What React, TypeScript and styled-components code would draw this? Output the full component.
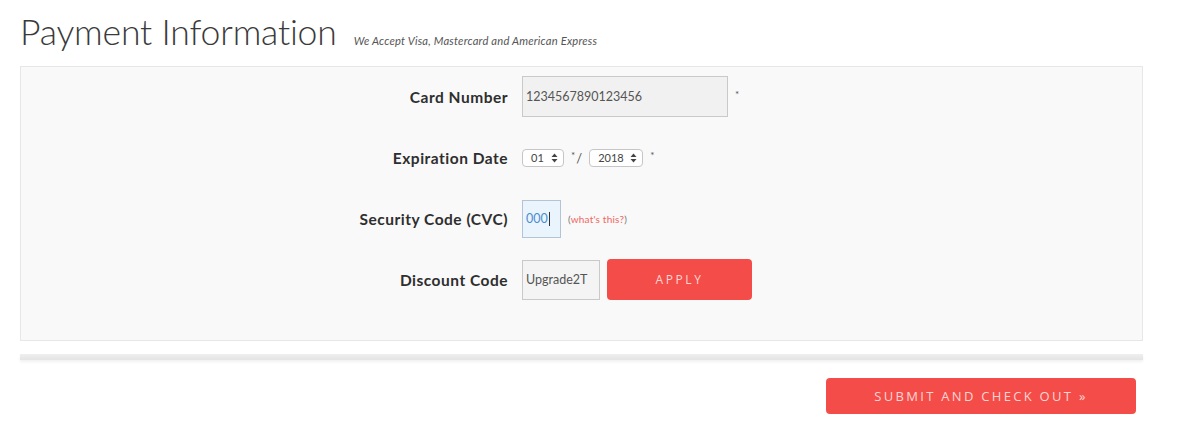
import * as React from "react";
import styled, { createGlobalStyle } from "styled-components";

const GlobalStyle = createGlobalStyle`
  body {
    margin: 0;
    background: #fff;
    font-family: Lato, "Open Sans", sans-serif;
    color: #333;
  }
`;

const red = "#f44d49";

const Arrows = () => (
  <svg width="7" height="10" viewBox="0 0 7 10">
    <path d="M3.5 0.5 L6.5 4 L0.5 4 Z M3.5 9.5 L6.5 6 L0.5 6 Z" fill="#444" />
  </svg>
);

const App = () => {
  return (
    <Page>
      <GlobalStyle />
      <Header>
        <Title>Payment Information</Title>
        <Subtitle>We Accept Visa, Mastercard and American Express</Subtitle>
      </Header>

      <Panel>
        <Row>
          <Label>Card Number</Label>
          <Field>
            <TextBox $width={206} $height={41}>
              1234567890123456
            </TextBox>
            <Star>*</Star>
          </Field>
        </Row>
        <Row>
          <Label>Expiration Date</Label>
          <Field>
            <Select $width={42}>
              01 <Arrows />
            </Select>
            <Slash>
              <Star>*</Star>/
            </Slash>
            <Select $width={54}>
              2018 <Arrows />
            </Select>
            <Star>*</Star>
          </Field>
        </Row>
        <Row>
          <Label>Security Code (CVC)</Label>
          <Field>
            <TextBox $width={39} $height={38} $focused>
              000<Caret />
            </TextBox>
            <Help>
              (<HelpLink>what's this?</HelpLink>)
            </Help>
          </Field>
        </Row>
        <Row>
          <Label>Discount Code</Label>
          <Field>
            <TextBox $width={78} $height={40} $tint="#f4f4f4">
              Upgrade2T
            </TextBox>
            <ApplyButton>Apply</ApplyButton>
          </Field>
        </Row>
      </Panel>

      <Divider />

      <Footer>
        <SubmitButton>Submit and Check Out »</SubmitButton>
      </Footer>
    </Page>
  );
};

const Page = styled.div`
  width: 1182px;
  height: 436px;
  padding: 0 39px 0 20px;
  box-sizing: border-box;
  overflow: hidden;
`;

const Header = styled.div`
  display: flex;
  align-items: baseline;
  gap: 17px;
  height: 66px;
  padding-top: 10px;
  box-sizing: border-box;
`;

const Title = styled.h1`
  margin: 0;
  font-size: 35.6px;
  font-weight: 300;
  color: #3a3a3a;
  letter-spacing: -0.2px;
`;

const Subtitle = styled.span`
  font-size: 11.2px;
  font-style: italic;
  color: #555;
  letter-spacing: 0.2px;
`;

const Panel = styled.div`
  background: #f9f9f9;
  border: 1px solid #e7e7e7;
  height: 275px;
  box-sizing: border-box;
`;

const Row = styled.div`
  display: grid;
  grid-template-columns: 487px 1fr;
  column-gap: 14px;
  align-items: center;
  height: 61px;

  &:first-child {
    margin-top: -1px;
  }
`;

const Label = styled.div`
  text-align: right;
  font-size: 15.5px;
  font-weight: 700;
  color: #2e2e2e;
  letter-spacing: 0.5px;
`;

const Field = styled.div`
  display: flex;
  align-items: center;
  gap: 7px;
`;

const TextBox = styled.div<{
  $width: number;
  $height: number;
  $focused?: boolean;
  $tint?: string;
}>`
  display: flex;
  align-items: center;
  width: ${(p) => p.$width}px;
  height: ${(p) => p.$height}px;
  box-sizing: border-box;
  padding: 0 3px;
  background: ${(p) => (p.$focused ? "#eaf4fd" : p.$tint || "#f1f1f1")};
  border: 1px solid ${(p) => (p.$focused ? "#b4c4d4" : "#c9c9c9")};
  font-size: 12.5px;
  color: ${(p) => (p.$focused ? "#4a8ed0" : "#555")};
  white-space: nowrap;
  overflow: hidden;
`;

const Caret = styled.span`
  display: inline-block;
  width: 1px;
  height: 14px;
  background: #333;
  margin-left: 1px;
`;

const Star = styled.span`
  font-size: 10px;
  line-height: 10px;
  color: #555;
  margin-bottom: 6px;
`;

const Slash = styled.span`
  display: flex;
  align-items: center;
  gap: 1px;
  font-size: 13px;
  color: #555;
`;

const Select = styled.div<{ $width: number }>`
  display: flex;
  align-items: center;
  justify-content: space-between;
  width: ${(p) => p.$width}px;
  height: 18px;
  box-sizing: border-box;
  padding: 0 5px 0 8px;
  background: #fff;
  border: 1px solid #c6c6c6;
  border-radius: 4px;
  font-size: 11px;
  color: #444;
`;

const Help = styled.span`
  font-size: 10px;
  color: #777;
  letter-spacing: 0.2px;
`;

const HelpLink = styled.span`
  color: #f06660;
`;

const ApplyButton = styled.button`
  width: 145px;
  height: 41px;
  border: none;
  border-radius: 4px;
  background: ${red};
  color: #fcd5d3;
  font-family: "Open Sans", Lato, sans-serif;
  font-size: 12px;
  letter-spacing: 2.6px;
  text-transform: uppercase;
`;

const Divider = styled.div`
  height: 6px;
  margin-top: 13px;
  background: linear-gradient(#efefef, #e4e4e4);
  box-shadow: 0 2px 3px rgba(0, 0, 0, 0.06);
`;

const Footer = styled.div`
  display: flex;
  justify-content: flex-end;
  padding-top: 18px;
  padding-right: 7px;
`;

const SubmitButton = styled.button`
  width: 310px;
  height: 36px;
  border: none;
  border-radius: 4px;
  background: ${red};
  color: #fcd5d3;
  font-family: "Open Sans", Lato, sans-serif;
  font-size: 13px;
  letter-spacing: 2.3px;
  text-transform: uppercase;
`;

export default App;
